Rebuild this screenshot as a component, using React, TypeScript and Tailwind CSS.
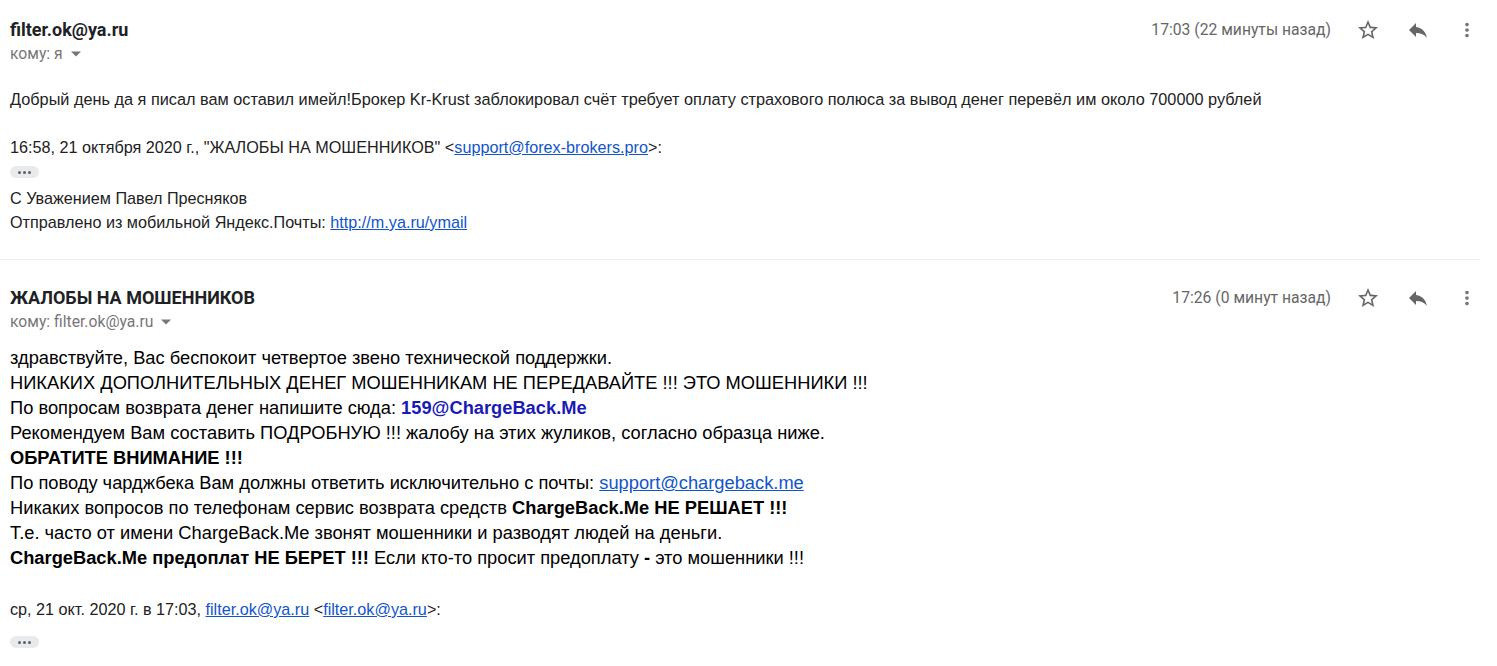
import { MdStarBorder, MdReply, MdMoreVert } from 'react-icons/md'

const arial = { fontFamily: '"Liberation Sans", Arial, sans-serif' }

function Dots() {
  return (
    <div className="w-[29px] h-[12px] rounded-full bg-[#e8eaed] flex items-center justify-center gap-[2px]">
      <span className="w-[3px] h-[3px] rounded-full bg-[#5f6368]" />
      <span className="w-[3px] h-[3px] rounded-full bg-[#5f6368]" />
      <span className="w-[3px] h-[3px] rounded-full bg-[#5f6368]" />
    </div>
  )
}

function Header({ from, to, time }: { from: string; to: string; time: string }) {
  return (
    <div className="flex items-start pr-[2px]">
      <div className="flex-1">
        <div className="text-[18px] font-bold text-[#202124] leading-[20px] h-[20px]">{from}</div>
        <div className="flex items-center text-[15.7px] text-[#777] mt-[5px] leading-[18px] h-[18px]">
          кому: {to}
          <svg width="10" height="6" viewBox="0 0 10 5" className="ml-[8px]"><path d="M0 0l5 5 5-5z" fill="#777" /></svg>
        </div>
      </div>
      <div className="flex items-center text-[15.7px] text-[#666] h-[20px]">
        <span>{time}</span>
        <MdStarBorder className="ml-[25px] text-[#666]" size={24} />
        <MdReply className="ml-[26px] text-[#666]" size={24} />
        <MdMoreVert className="ml-[26px] text-[#777]" size={22} />
      </div>
    </div>
  )
}

export default function App() {
  return (
    <div className="w-[1497px] h-[666px] bg-white overflow-hidden" style={{ fontFamily: 'Roboto, "Liberation Sans", sans-serif' }}>
      <div className="pl-[10px] pt-[20px] w-[1480px]">
        <Header from="filter.ok@ya.ru" to="я" time="17:03 (22 минуты назад)" />
        <div className="text-[16.3px] text-[#222] mt-[24px] leading-[24px]" style={arial}>
          Добрый день да я писал вам оставил имейл!Брокер Kr-Krust заблокировал счёт требует оплату страхового полюса за вывод денег перевёл им около 700000 рублей
        </div>
        <div className="text-[16.2px] text-[#222] mt-[24px] leading-[24px]" style={arial}>
          16:58, 21 октября 2020 г., "ЖАЛОБЫ НА МОШЕННИКОВ" &lt;<a className="text-[#1155cc] underline">support@forex-brokers.pro</a>&gt;:
        </div>
        <div className="mt-[7px]"><Dots /></div>
        <div className="text-[16.2px] text-[#222] mt-[8px] leading-[24px]" style={arial}>
          <div>С Уважением Павел Пресняков</div>
          <div>Отправлено из мобильной Яндекс.Почты: <a className="text-[#1155cc] underline">http://m.ya.ru/ymail</a></div>
        </div>
      </div>
      <div className="mt-[25px] h-px bg-[#eceff1] w-[1480px]" />
      <div className="pl-[10px] pt-[28px] w-[1480px]">
        <Header from="ЖАЛОБЫ НА МОШЕННИКОВ" to="filter.ok@ya.ru" time="17:26 (0 минут назад)" />
        <div className="text-[18.3px] text-[#000] mt-[14px] leading-[25px]" style={arial}>
          <div>здравствуйте, Вас беспокоит четвертое звено технической поддержки.</div>
          <div>НИКАКИХ ДОПОЛНИТЕЛЬНЫХ ДЕНЕГ МОШЕННИКАМ НЕ ПЕРЕДАВАЙТЕ !!! ЭТО МОШЕННИКИ !!!</div>
          <div>По вопросам возврата денег напишите сюда: <b className="text-[#1a1ab8]">159@ChargeBack.Me</b></div>
          <div>Рекомендуем Вам составить ПОДРОБНУЮ !!! жалобу на этих жуликов, согласно образца ниже.</div>
          <div><b>ОБРАТИТЕ ВНИМАНИЕ !!!</b></div>
          <div>По поводу чарджбека Вам должны ответить исключительно с почты: <a className="text-[#1155cc] underline">support@chargeback.me</a></div>
          <div>Никаких вопросов по телефонам сервис возврата средств <b>ChargeBack.Me НЕ РЕШАЕТ !!!</b></div>
          <div>Т.е. часто от имени ChargeBack.Me звонят мошенники и разводят людей на деньги.</div>
          <div><b>ChargeBack.Me предоплат НЕ БЕРЕТ !!!</b> Если кто-то просит предоплату <b>-</b> это мошенники !!!</div>
        </div>
        <div className="text-[16.2px] text-[#222] mt-[27px] leading-[24px]" style={arial}>
          ср, 21 окт. 2020 г. в 17:03, <a className="text-[#1155cc] underline">filter.ok@ya.ru</a> &lt;<a className="text-[#1155cc] underline">filter.ok@ya.ru</a>&gt;:
        </div>
        <div className="mt-[15px]"><Dots /></div>
      </div>
    </div>
  )
}
